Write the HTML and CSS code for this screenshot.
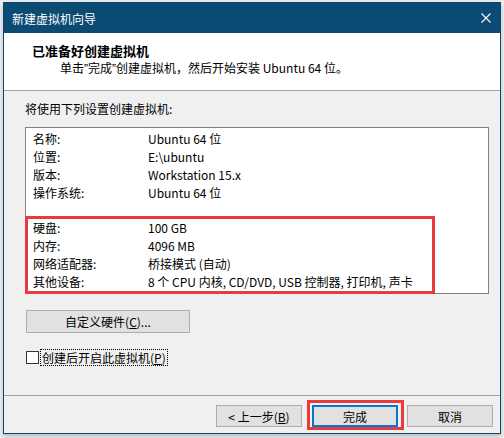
FILE: index.html
```html
<!DOCTYPE html>
<html lang="zh-CN">
<head>
<meta charset="utf-8">
<title>新建虚拟机向导</title>
<link rel="stylesheet" href="styles.css">
</head>
<body>
<div class="window">
  <div class="titlebar">
    <span class="title">新建虚拟机向导</span>
    <svg class="close" width="10" height="10" viewBox="0 0 10 10"><path d="M0.5 0.5L9.5 9.5M9.5 0.5L0.5 9.5" stroke="#fff" stroke-width="1.1" fill="none"/></svg>
  </div>
  <div class="header">
    <div class="heading">已准备好创建虚拟机</div>
    <div class="subtitle">单击<span class="q">”</span>完成<span class="q">”</span>创建虚拟机，然后开始安装 Ubuntu 64 位。</div>
  </div>
  <div class="content">
    <div class="intro">将使用下列设置创建虚拟机:</div>
    <div class="summary">
      <div class="group">
        <span>名称:</span><span>Ubuntu 64 位</span>
        <span>位置:</span><span>E:\ubuntu</span>
        <span>版本:</span><span>Workstation 15.x</span>
        <span>操作系统:</span><span>Ubuntu 64 位</span>
      </div>
      <div class="group marked">
        <span>硬盘:</span><span>100 GB</span>
        <span>内存:</span><span>4096 MB</span>
        <span>网络适配器:</span><span>桥接模式 (自动)</span>
        <span>其他设备:</span><span>8 个 CPU 内核, CD/DVD, USB 控制器, 打印机, 声卡</span>
      </div>
    </div>
    <button class="btn custom">自定义硬件(<u>C</u>)...</button>
    <label class="check"><span class="checkbox"></span><span class="check-label">创建后开启此虚拟机(<u>P</u>)</span></label>
  </div>
  <div class="footer">
    <button class="btn back">&lt; 上一步(<u>B</u>)</button>
    <span class="marked-btn"><button class="btn primary">完成</button></span>
    <button class="btn cancel">取消</button>
  </div>
</div>
</body>
</html>
```
FILE: styles.css
```css
* { box-sizing: border-box; }
html, body { margin: 0; padding: 0; }
body {
  width: 504px;
  height: 438px;
  overflow: hidden;
  background: #ececec;
  font-family: "Noto Sans CJK SC", sans-serif;
  font-size: 12px;
  color: #000;
}
.window {
  margin: 2px 0 0 3px;
  width: 498px;
  height: 432px;
  border: 1px solid #0b4a73;
  background: #f0f0f0;
  display: flex;
  flex-direction: column;
  box-shadow: 0 2px 4px rgba(0, 0, 0, 0.22);
}
.titlebar {
  flex: none;
  height: 30px;
  background: #0b4a73;
  color: #fff;
  display: flex;
  align-items: center;
  justify-content: space-between;
  padding: 0 9px 0 8px;
}
.title { line-height: 17px; }
.close { display: block; }
.header {
  flex: none;
  height: 58px;
  background: #fff;
  border-bottom: 1px solid #a0a0a0;
  padding: 9px 0 0 28px;
}
.heading {
  font-weight: bold;
  font-size: 13px;
  line-height: 17px;
}
.subtitle {
  line-height: 17px;
  padding-left: 28px;
}
.q { font-family: "Liberation Sans", sans-serif; }
.content {
  flex: none;
  height: 305px;
  border-bottom: 1px solid #a0a0a0;
  padding: 9px 0 0 21px;
}
.intro { line-height: 17px; }
.summary {
  margin-top: 10px;
  width: 464px;
  background: #fff;
  border: 1px solid #828282;
  padding-top: 2px;
}
.group {
  display: grid;
  grid-template-columns: 115px 1fr;
  padding-left: 7px;
  line-height: 18px;
  white-space: nowrap;
}
.group.marked {
  width: 410px;
  margin: 14px 0 -1px -1px;
  border: 3px solid #ea3a3c;
  padding-left: 5px;
}
.btn {
  display: flex;
  align-items: center;
  justify-content: center;
  height: 22px;
  width: 86px;
  padding: 0;
  margin: 0;
  background: #e1e1e1;
  border: 1px solid #adadad;
  font-family: inherit;
  font-size: 12px;
  color: #000;
  line-height: 17px;
}
.btn u { text-underline-offset: 1px; }
.custom {
  width: 164px;
  height: 23px;
  margin: 16px 0 0 1px;
}
.check {
  display: flex;
  align-items: center;
  margin-top: 16px;
  height: 17px;
}
.checkbox {
  width: 13px;
  height: 13px;
  margin-left: 1px;
  border: 1px solid #333;
  background: #fff;
}
.check-label {
  margin-left: 1px;
  height: 17px;
  line-height: 15px;
  padding: 0 1px;
  border: 1px dotted #000;
}
.footer {
  flex: 1;
  display: flex;
  justify-content: flex-end;
  align-items: flex-start;
  padding: 9px 7px 0 0;
}
.marked-btn {
  position: relative;
  margin: 0 9px 0 10px;
}
.marked-btn::after {
  content: "";
  position: absolute;
  left: -5px;
  top: -5px;
  right: -6px;
  bottom: -3px;
  border: 3px solid #ea3a3c;
}
.primary { border: 2px solid #0078d7; }
```
